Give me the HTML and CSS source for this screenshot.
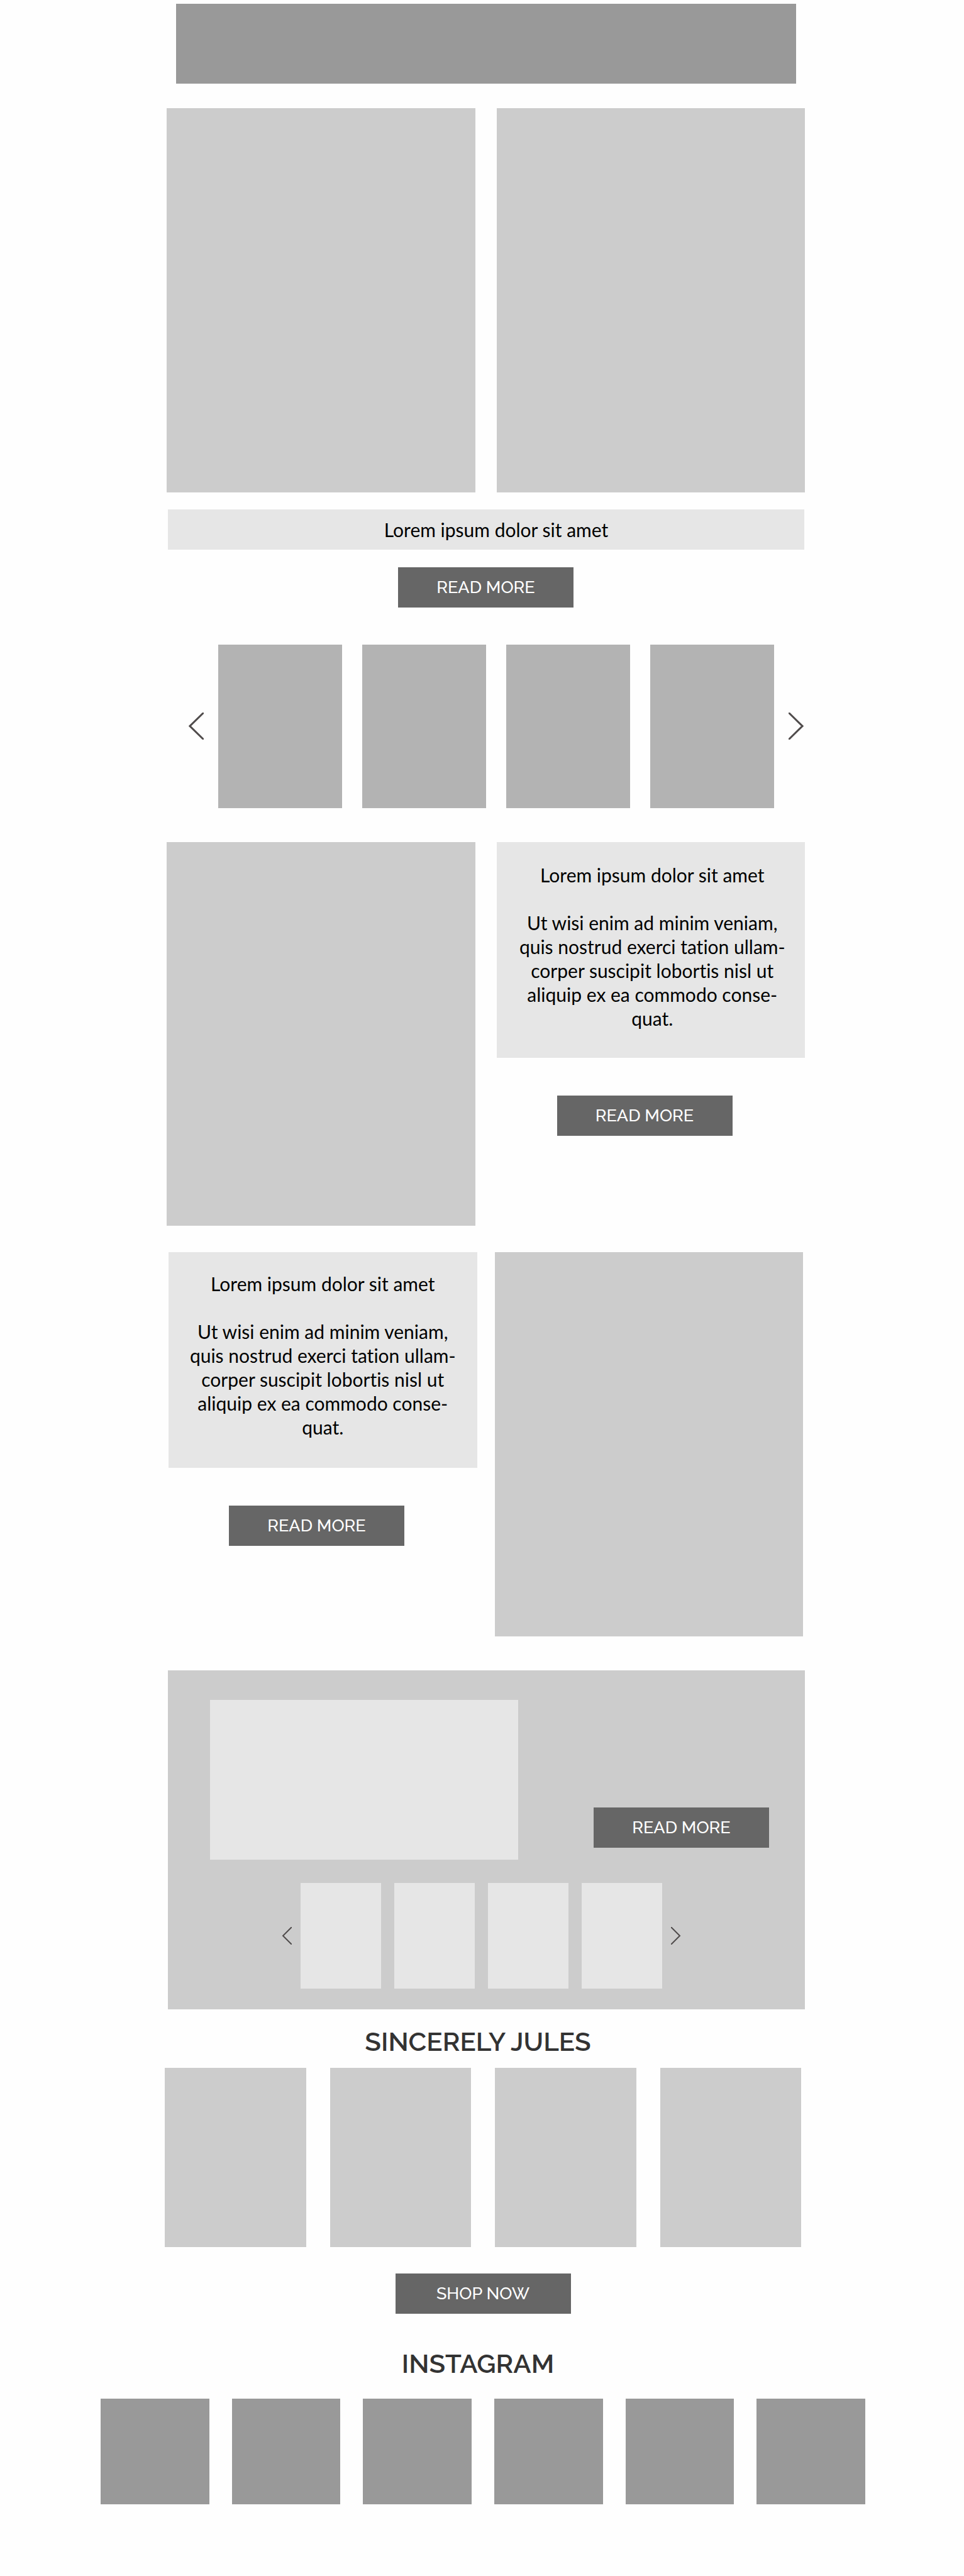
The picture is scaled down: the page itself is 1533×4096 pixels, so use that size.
FILE: index.html
```html
<!DOCTYPE html>
<html lang="en">
<head>
<meta charset="utf-8">
<meta name="viewport" content="width=device-width, initial-scale=1">
<title>Sincerely Jules</title>
<link rel="stylesheet" href="styles.css">
</head>
<body>
<header class="masthead"><div class="banner"></div></header>
<main>
  <section class="intro">
    <div class="pair">
      <div class="photo"></div>
      <div class="photo"></div>
    </div>
    <p class="caption">Lorem ipsum dolor sit amet</p>
    <button class="btn" type="button">READ MORE</button>
  </section>

  <section class="carousel carousel-wide" aria-label="Latest posts">
    <button class="arrow" type="button" aria-label="Previous posts">
      <svg viewBox="0 0 24 43" fill="none" stroke="currentColor" stroke-width="3"><path d="M25 -1 2 21.5 25 44"/></svg>
    </button>
    <div class="track">
      <div class="slide"></div><div class="slide"></div><div class="slide"></div><div class="slide"></div>
    </div>
    <button class="arrow" type="button" aria-label="Next posts">
      <svg viewBox="0 0 24 43" fill="none" stroke="currentColor" stroke-width="3"><path d="M-1 -1 22 21.5 -1 44"/></svg>
    </button>
  </section>

  <article class="pair story">
    <div class="photo"></div>
    <div class="story-side">
      <div class="copy">
        <h2>Lorem ipsum dolor sit amet</h2>
        <p>Ut wisi enim ad minim veniam,<br>quis nostrud exerci tation ullam-<br>corper suscipit lobortis nisl ut<br>aliquip ex ea commodo conse-<br>quat.</p>
      </div>
      <button class="btn" type="button">READ MORE</button>
    </div>
  </article>

  <article class="pair story story-reverse">
    <div class="story-side">
      <div class="copy">
        <h2>Lorem ipsum dolor sit amet</h2>
        <p>Ut wisi enim ad minim veniam,<br>quis nostrud exerci tation ullam-<br>corper suscipit lobortis nisl ut<br>aliquip ex ea commodo conse-<br>quat.</p>
      </div>
      <button class="btn" type="button">READ MORE</button>
    </div>
    <div class="photo"></div>
  </article>

  <section class="feature">
    <div class="feature-panel">
      <div class="feature-top">
        <div class="feature-photo"></div>
        <button class="btn" type="button">READ MORE</button>
      </div>
      <div class="carousel carousel-small">
        <button class="arrow" type="button" aria-label="Previous items">
          <svg viewBox="0 0 16 28" fill="none" stroke="currentColor" stroke-width="2"><path d="M17 -1 2 14 17 29"/></svg>
        </button>
        <div class="track">
          <div class="slide"></div><div class="slide"></div><div class="slide"></div><div class="slide"></div>
        </div>
        <button class="arrow" type="button" aria-label="Next items">
          <svg viewBox="0 0 16 28" fill="none" stroke="currentColor" stroke-width="2"><path d="M-1 -1 14 14 -1 29"/></svg>
        </button>
      </div>
    </div>
  </section>

  <section class="shop">
    <h1 class="title">SINCERELY JULES</h1>
    <div class="products">
      <div class="product"></div><div class="product"></div><div class="product"></div><div class="product"></div>
    </div>
    <button class="btn" type="button">SHOP NOW</button>
  </section>

  <section class="instagram">
    <h2 class="title">INSTAGRAM</h2>
    <div class="tiles">
      <div class="tile"></div><div class="tile"></div><div class="tile"></div><div class="tile"></div><div class="tile"></div><div class="tile"></div>
    </div>
  </section>
</main>
</body>
</html>
```

FILE: styles.css
```css
* { box-sizing: border-box; }

body {
  margin: 0;
  background: #fefefe;
  color: #000;
  font-family: Lato, "Noto Sans", sans-serif;
  font-size: 30px;
  line-height: 38px;
  font-variant-ligatures: none;
}

h1, h2, p { margin: 0; font-weight: 400; font-size: inherit; }

.masthead { padding: 6px 267px 39px 280px; }
.banner { height: 127px; background: #999; }

.btn {
  display: block;
  width: 279px;
  height: 64px;
  margin: 0 auto;
  padding: 0;
  border: 0;
  background: #666;
  color: #fff;
  font: 500 27px/64px Raleway, Lato, sans-serif;
}

/* Two equal columns */
.pair { display: grid; grid-template-columns: 1fr 1fr; gap: 34px; }
.photo { aspect-ratio: 490 / 610; background: #ccc; }

.intro { padding: 0 253px 0 265px; }
.caption {
  margin: 27px 1px 28px 2px;
  padding: 13px 0 13px 32px;
  background: #e6e6e6;
  text-align: center;
}

/* Carousels */
.carousel { display: flex; align-items: center; justify-content: center; }
.arrow { flex: none; padding: 0; border: 0; background: none; color: #504c4c; }
.arrow svg { display: block; width: 100%; }
.track { display: grid; grid-template-columns: repeat(4, 1fr); }

.carousel-wide { gap: 23px; padding: 59px 255px 54px 300px; }
.carousel-wide .arrow { width: 24px; }
.carousel-wide .track { flex: 1; gap: 32px; }
.carousel-wide .slide { height: 260px; background: #b3b3b3; }

.carousel-small { gap: 14px; margin: 37px 27px 0 0; }
.carousel-small .arrow { width: 16px; }
.carousel-small .track { flex: 0 1 575px; gap: 21px; }
.carousel-small .slide { height: 168px; background: #e6e6e6; }

/* Stories */
.story { padding: 0 253px 42px 265px; }
.copy {
  margin-bottom: 60px;
  padding: 33px 0 44px 5px;
  background: #e6e6e6;
  text-align: center;
}
.copy h2 { margin-bottom: 38px; }
.story .btn { margin-left: 96px; }

.story-reverse { gap: 28px; padding: 0 256px 54px 268px; }
.story-reverse .copy { padding: 31px 0 46px; }

/* Feature */
.feature { padding: 0 253px 0 267px; }
.feature-panel { padding: 47px 57px 33px 67px; background: #ccc; }
.feature-top { display: flex; justify-content: space-between; align-items: flex-end; }
.feature-photo { flex: 0 1 490px; height: 254px; background: #e6e6e6; }
.feature-top .btn { margin: 0 0 19px; }

/* Shop and Instagram */
.title {
  padding-right: 16px;
  color: #333;
  font: 600 42px/50px Raleway, Lato, sans-serif;
  text-align: center;
}
.shop { padding: 27px 259px 0 262px; }
.products { display: grid; grid-template-columns: repeat(4, 1fr); gap: 38px; margin: 16px 0 42px; }
.product { height: 285px; background: #ccc; }

.instagram { padding: 55px 157px 114px 160px; }
.tiles { display: grid; grid-template-columns: repeat(6, 1fr); gap: 36px; margin-top: 30px; }
.tile { height: 168px; background: #999; }
```
